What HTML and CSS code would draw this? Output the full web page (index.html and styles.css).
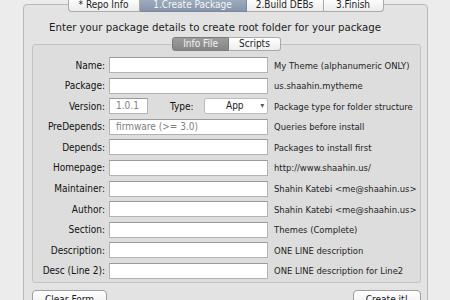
FILE: index.html
```html
<!DOCTYPE html>
<html lang="en">
<head>
    <meta charset="UTF-8">
    <title>Create Package</title>
    <link rel="stylesheet" href="styles.css">
</head>
<body>
    <div class="tabview">
        <div class="tabs">
            <span class="tab">* Repo Info</span>
            <span class="tab selected">1.Create Package</span>
            <span class="tab">2.Build DEBs</span>
            <span class="tab">3.Finish</span>
        </div>
        <p class="intro">Enter your package details to create root folder for your package</p>
        <div class="subview">
            <div class="subtabs">
                <span class="subtab selected">Info File</span>
                <span class="subtab">Scripts</span>
            </div>
            <div class="form">
                <label>Name:</label>
                <span class="field"></span>
                <span class="hint">My Theme (alphanumeric ONLY)</span>

                <label>Package:</label>
                <span class="field"></span>
                <span class="hint">us.shaahin.mytheme</span>

                <label>Version:</label>
                <div class="version-row">
                    <span class="field short placeholder">1.0.1</span>
                    <label class="type-label">Type:</label>
                    <span class="popup">App<span class="arrow">&#9662;</span></span>
                </div>
                <span class="hint">Package type for folder structure</span>

                <label>PreDepends:</label>
                <span class="field placeholder">firmware (&gt;= 3.0)</span>
                <span class="hint">Queries before install</span>

                <label>Depends:</label>
                <span class="field"></span>
                <span class="hint">Packages to install first</span>

                <label>Homepage:</label>
                <span class="field"></span>
                <span class="hint">http://www.shaahin.us/</span>

                <label>Maintainer:</label>
                <span class="field"></span>
                <span class="hint">Shahin Katebi &lt;me@shaahin.us&gt;</span>

                <label>Author:</label>
                <span class="field"></span>
                <span class="hint">Shahin Katebi &lt;me@shaahin.us&gt;</span>

                <label>Section:</label>
                <span class="field"></span>
                <span class="hint">Themes (Complete)</span>

                <label>Description:</label>
                <span class="field"></span>
                <span class="hint">ONE LINE description</span>

                <label>Desc (Line 2):</label>
                <span class="field"></span>
                <span class="hint">ONE LINE description for Line2</span>
            </div>
        </div>
        <div class="actions">
            <button class="btn clear">Clear Form</button>
            <button class="btn create">Create it!</button>
        </div>
    </div>
</body>
</html>
```

FILE: styles.css
```css
body {
    margin: 0;
    background: #ececec;
    font-family: "DejaVu Sans Condensed", "DejaVu Sans", sans-serif;
    color: #1e1e1e;
    overflow: hidden;
}

.tabview {
    margin: 4px 0 0 23px;
    width: 403px;
    height: 300px;
    background: #e3e3e3;
    border: 1px solid #b9b9b9;
    border-radius: 4px;
}

/* top segmented tabs */
.tabs {
    display: flex;
    justify-content: center;
    margin-top: -7px;
    height: 14px;
}

.tab {
    height: 14px;
    line-height: 14px;
    text-align: center;
    font-size: 10px;
    background: linear-gradient(#ffffff, #ececec);
    border: 1px solid #a9a9a9;
    border-top: none;
    border-left: none;
    box-sizing: border-box;
}

.tab:nth-child(1) { width: 72px; }
.tab:nth-child(2) { width: 107px; }
.tab:nth-child(3) { width: 77px; }
.tab:nth-child(4) { width: 60px; }

.tab:first-child {
    border-left: 1px solid #a9a9a9;
    border-radius: 0 0 0 4px;
}

.tab:last-child {
    border-radius: 0 0 4px 0;
}

.tab.selected {
    color: #f4f6f9;
    background: linear-gradient(#a2afc0, #8594a9);
    border-color: #7d8a9c;
}

.intro {
    margin: 10px 0 0 25px;
    font-family: "DejaVu Sans", sans-serif;
    font-size: 10.2px;
    line-height: 12px;
}

/* inner box */
.subview {
    margin: 10px 6px 0 8px;
    background: #dddddd;
    border: 1px solid #c3c3c3;
    border-radius: 3px;
}

.subtabs {
    display: flex;
    justify-content: center;
    margin-top: -8px;
    height: 14px;
}

.subtab {
    height: 12px;
    line-height: 12px;
    padding: 0 10px;
    font-size: 10px;
    background: linear-gradient(#ffffff, #ededed);
    border: 1px solid #a9a9a9;
}

.subtab.selected {
    color: #f2f2f2;
    background: linear-gradient(#9d9d9d, #858585);
    border-color: #7c7c7c;
    border-radius: 3px 0 0 3px;
}

.subtab:last-child {
    border-left: none;
    border-radius: 0 3px 3px 0;
}

.form {
    display: grid;
    grid-template-columns: 72px 163px 1fr;
    grid-auto-rows: 16px;
    row-gap: 4.6px;
    align-items: center;
    padding: 6px 0 3px;
}

.form > label {
    text-align: right;
    font-size: 10px;
    color: #111111;
    white-space: nowrap;
}

.field {
    display: block;
    height: 14px;
    line-height: 14px;
    background: #ffffff;
    border: 1px solid #b3b3b3;
    border-top-color: #9a9a9a;
    padding: 0 6px;
    font-size: 10px;
}

.form > .field,
.version-row {
    margin-left: 4px;
}

.placeholder {
    color: #808080;
}

.hint {
    font-size: 9.4px;
    padding-left: 6px;
    white-space: nowrap;
}

.version-row {
    display: flex;
    align-items: center;
    height: 16px;
}

.field.short {
    width: 25px;
}

.type-label {
    font-size: 10px;
    color: #111111;
    margin-left: 22px;
    width: 34px;
}

.popup {
    position: relative;
    flex: 1;
    height: 14px;
    line-height: 14px;
    padding-left: 21px;
    font-size: 10px;
    background: #ffffff;
    border: 1px solid #bcbcbc;
    border-radius: 2px;
}

.arrow {
    position: absolute;
    right: 3px;
    top: 0;
    font-size: 8px;
    color: #555555;
}

.actions {
    display: flex;
    justify-content: space-between;
    margin: 7px 6px 0 8px;
}

.btn {
    height: 19px;
    padding: 0;
    font-family: inherit;
    font-size: 10px;
    color: #1e1e1e;
    background: linear-gradient(#ffffff, #ececec);
    border: 1px solid #9f9f9f;
    border-radius: 4px;
}

.btn.clear {
    width: 75px;
}

.btn.create {
    width: 68px;
}
```
